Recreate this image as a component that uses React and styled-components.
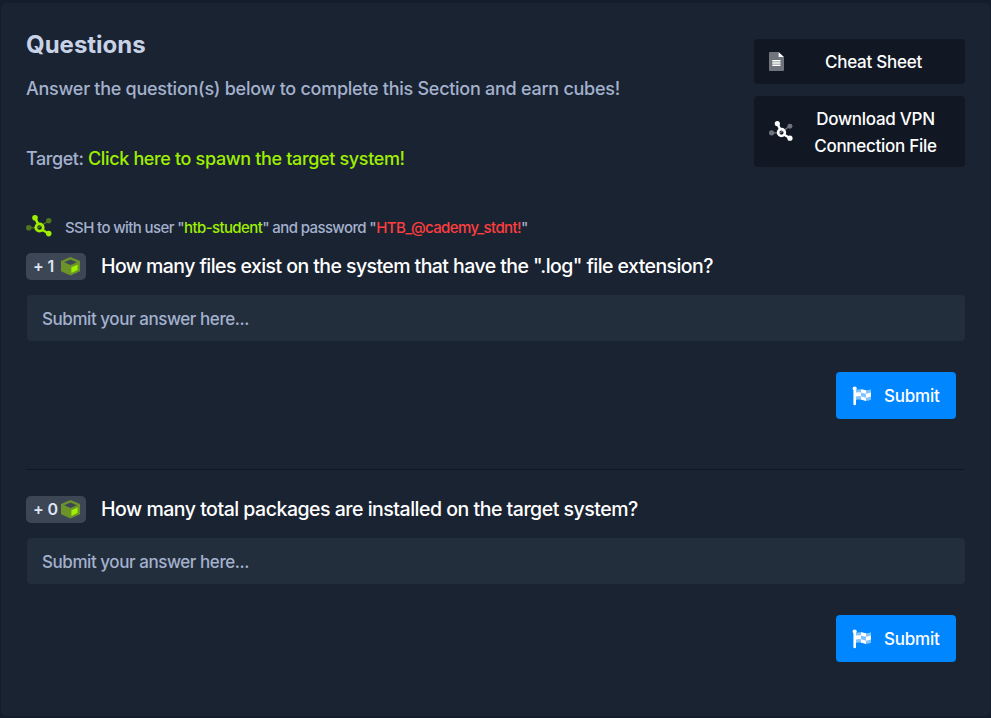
import React from "react";
import styled, { createGlobalStyle } from "styled-components";

const GlobalStyle = createGlobalStyle`
  *, *::before, *::after { box-sizing: border-box; }
  body {
    margin: 0;
    background: #141d2b;
    font-family: Inter, "Liberation Sans", sans-serif;
    color: #a4b1cd;
  }
`;

const Page = styled.div`
  height: 718px;
  padding: 3px 1px 2px;
`;

const Card = styled.main`
  height: 713px;
  padding: 24px 25px 0;
  border-radius: 5px;
  background: #1a2332;
`;

const Header = styled.header`
  display: flex;
  justify-content: space-between;
  height: 183px;
`;

const Title = styled.h1`
  margin: 0;
  font-size: 24px;
  line-height: 36px;
  font-weight: 700;
  color: #c8d2e6;
`;

const Lead = styled.p`
  margin: ${(p) => p.$top}px 0 0;
  font-size: 18px;
  font-weight: 450;
  line-height: 28px;
  white-space: nowrap;
  letter-spacing: ${(p) => p.$track};
`;

const Spawn = styled.span`
  color: #9fef00;
  font-weight: 500;
  letter-spacing: -0.35px;
`;

const Actions = styled.div`
  display: flex;
  flex-direction: column;
  gap: 12px;
  width: 211px;
  padding-top: 12px;
`;

const Action = styled.button`
  display: flex;
  align-items: center;
  height: ${(p) => p.$height}px;
  padding: 0 14px 0 15px;
  border: 0;
  border-radius: 4px;
  background: #111824;
  color: #fff;
  font: 500 17px/27px Inter, sans-serif;
  letter-spacing: -0.27px;
`;

const ActionLabel = styled.span`
  flex: 1;
  padding: 2px 0 0 ${(p) => p.$inset}px;
  text-align: center;
  white-space: nowrap;
`;

const Hint = styled.div`
  display: flex;
  align-items: center;
  height: 32px;
  margin-bottom: 11px;
  font-size: 15px;
  font-weight: 450;
  white-space: nowrap;
  letter-spacing: -0.61px;
`;

const HintText = styled.span`
  padding: 3px 0 0 13px;
`;

const Accent = styled.span`
  color: ${(p) => p.$color};
  font-weight: 500;
`;

const Question = styled.section`
  height: 216px;
`;

const Prompt = styled.div`
  display: flex;
  align-items: center;
  height: 26px;
`;

const Reward = styled.span`
  display: flex;
  align-items: center;
  justify-content: space-between;
  width: 60px;
  height: 27px;
  margin-right: 15px;
  padding: 0 6px 0 7px;
  border-radius: 5px;
  background: #3c4655;
  color: #dfe5f2;
  font-size: 16px;
  font-weight: 600;
  letter-spacing: -0.2px;
`;

const PromptText = styled.h2`
  margin: 0;
  color: #fff;
  font-size: 19.5px;
  font-weight: 500;
  white-space: nowrap;
  letter-spacing: ${(p) => p.$track};
`;

const Answer = styled.input`
  display: block;
  width: 938px;
  height: 46px;
  margin: 16px 0 31px 1px;
  padding: 1px 15px 0;
  border: 0;
  border-radius: 4px;
  background: #222e3c;
  color: #fff;
  font: 450 17px Inter, sans-serif;
  letter-spacing: -0.44px;
  &::placeholder { color: #a4b1cd; opacity: 1; }
`;

const Submit = styled.button`
  display: flex;
  align-items: center;
  gap: 12px;
  width: 120px;
  height: 47px;
  margin: 0 9px 0 auto;
  padding: 0 16px;
  border: 0;
  border-radius: 4px;
  background: #0086ff;
  color: #fff;
  font: 500 17px Inter, sans-serif;
  letter-spacing: -0.2px;
`;

const Divider = styled.hr`
  height: 1px;
  margin: 0 0 26px;
  border: 0;
  background: #111824;
`;

function NodesIcon({ color, width }) {
  return (
    <svg width={width} height={(width * 22) / 26} viewBox="0 0 26 22" fill="none" stroke={color}>
      <g opacity=".4">
        <path d="M3 12.8h9L22.5 5.8" strokeWidth="1.3" />
        <circle cx="2.8" cy="12.8" r="2.8" fill={color} stroke="none" />
        <circle cx="22.7" cy="5.7" r="2.7" fill={color} stroke="none" />
      </g>
      <path d="M9 2.8l3 6M16.5 15l6 3.5" strokeWidth="2.6" />
      <circle cx="13.5" cy="12.5" r="3.7" strokeWidth="2.8" />
      <circle cx="9" cy="2.8" r="2.8" fill={color} stroke="none" />
      <circle cx="22.7" cy="18.6" r="2.8" fill={color} stroke="none" />
    </svg>
  );
}

function SheetIcon() {
  return (
    <svg width="15" height="19" viewBox="0 0 15 19">
      <path d="M1 0h8.5v5H15v13a1 1 0 0 1-1 1H1a1 1 0 0 1-1-1V1a1 1 0 0 1 1-1z" fill="#70747c" />
      <path d="M9.5 0L15 5H9.5zM3.3 8h8.2v1.6H3.3zM3.3 10.3h8.2v1.5H3.3zM3.3 12.5h8.2v1.6H3.3z" fill="#fff" />
    </svg>
  );
}

function CubeIcon() {
  return (
    <svg width="19" height="19" viewBox="0 0 19 19">
      <path
        d="M9.5 0L19 4v10.3L9.5 18.6 0 14.3V4zM9.5 2.5L3.2 5.2l6.3 2.7 6.3-2.7z"
        fill="#6b932a"
        fillRule="evenodd"
      />
      <path d="M10.4 10.2l6.2-2.8v5.7l-6.2 2.9z" fill="#9fef00" />
    </svg>
  );
}

function FlagIcon() {
  return (
    <svg width="20" height="20" viewBox="0 0 20 20">
      <path d="M4 4c5-2.5 9 2 15-.8v10.600C13 16.500 9 12 4 14z" fill="#fff" opacity=".5" />
      <path
        d="M4 6.600q2.500-.8 5-.2V3.300q2.500.6 5 .9v3.600q2.600-.1 5-1.200v4q-2.400 1.100-5 1.100v3.200q-2.500-.3-5-1.300v-3.300q-2.500-.5-5 .3zM9 6.400v3.900q2.500.9 5 1.400V7.800q-2.500-.4-5-1.400z"
        fill="#fff"
        fillRule="evenodd"
      />
      <path d="M2.700 2.500v15.500" stroke="#fff" strokeWidth="2.600" strokeLinecap="round" />
      <circle cx="2.700" cy="2.500" r="2.100" fill="#fff" />
    </svg>
  );
}

function QuestionBlock({ cubes, track, children }) {
  return (
    <Question>
      <Prompt>
        <Reward>
          <span>+ {cubes}</span>
          <CubeIcon />
        </Reward>
        <PromptText $track={track}>{children}</PromptText>
      </Prompt>
      <Answer placeholder="Submit your answer here..." />
      <Submit>
        <FlagIcon />
        Submit
      </Submit>
    </Question>
  );
}

export default function App() {
  return (
    <>
      <GlobalStyle />
      <Page>
        <Card>
          <Header>
            <div>
              <Title>Questions</Title>
              <Lead $top={12} $track="-0.27px">
                Answer the question(s) below to complete this Section and earn cubes!
              </Lead>
              <Lead $top={42} $track="-0.43px">
                Target: <Spawn>Click here to spawn the target system!</Spawn>
              </Lead>
            </div>
            <Actions>
              <Action $height={45}>
                <SheetIcon />
                <ActionLabel $inset={12}>Cheat Sheet</ActionLabel>
              </Action>
              <Action $height={71}>
                <NodesIcon color="#fff" width={24} />
                <ActionLabel $inset={7}>
                  Download VPN
                  <br />
                  Connection File
                </ActionLabel>
              </Action>
            </Actions>
          </Header>
          <Hint>
            <NodesIcon color="#9fef00" width={26} />
            <HintText>
              SSH to with user "<Accent $color="#9fef00">htb-student</Accent>" and password "
              <Accent $color="#ff3e3e">HTB_@cademy_stdnt!</Accent>"
            </HintText>
          </Hint>
          <QuestionBlock cubes={1} track="-0.57px">
            How many files exist on the system that have the ".log" file extension?
          </QuestionBlock>
          <Divider />
          <QuestionBlock cubes={0} track="-0.49px">
            How many total packages are installed on the target system?
          </QuestionBlock>
        </Card>
      </Page>
    </>
  );
}
